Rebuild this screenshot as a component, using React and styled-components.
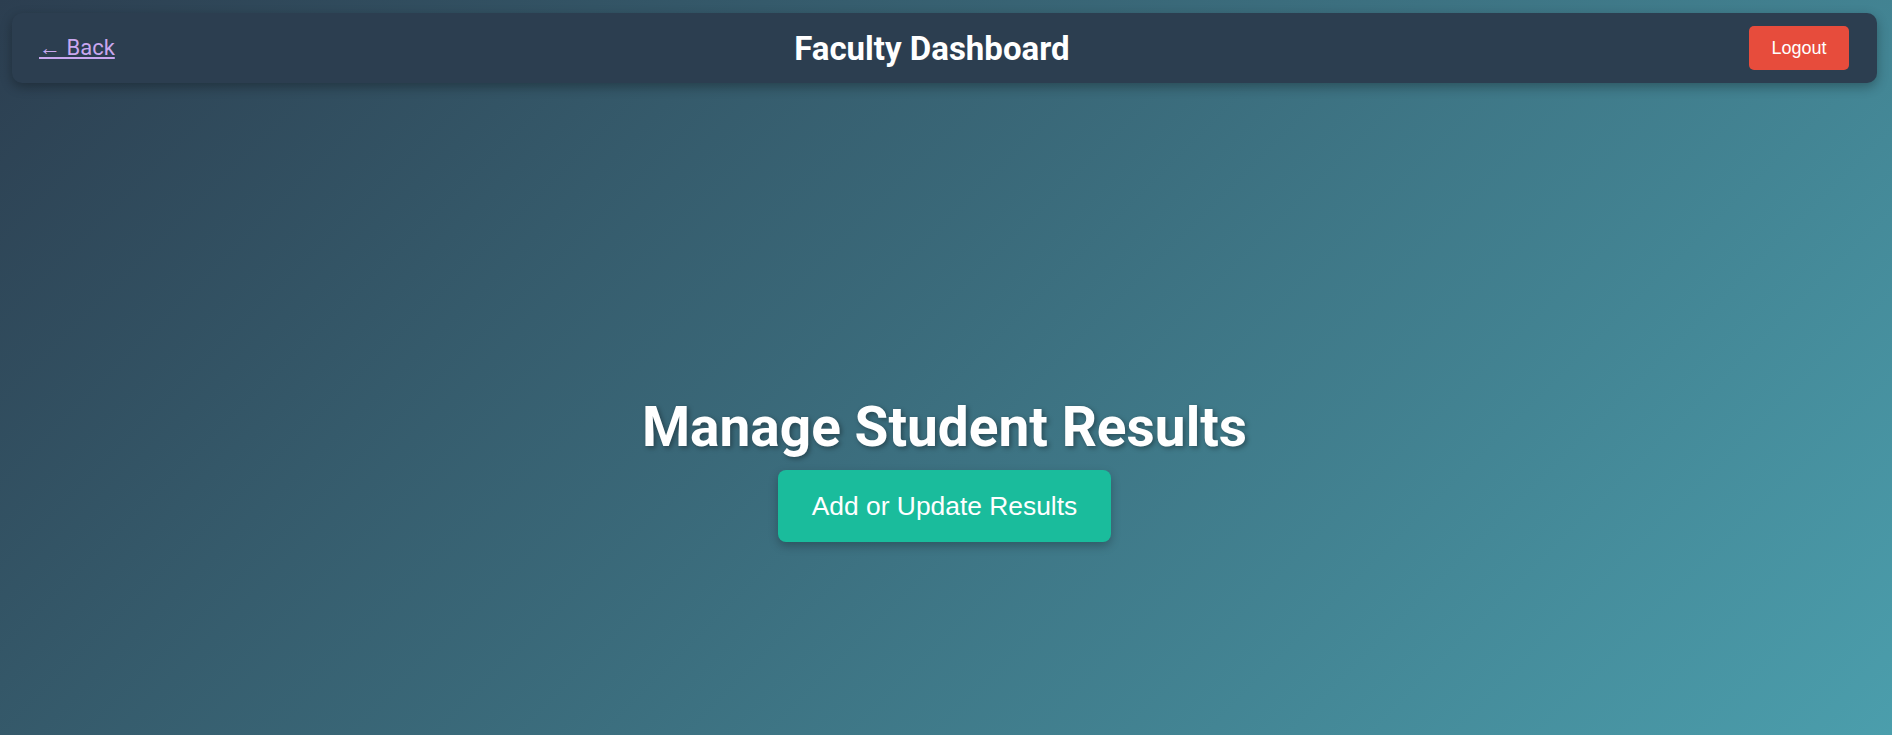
import React from 'react';
import styled, { createGlobalStyle } from 'styled-components';

const GlobalStyle = createGlobalStyle`
  body {
    margin: 0;
    overflow: hidden;
    font-family: Roboto, "Liberation Sans", sans-serif;
  }
`;

const Page = styled.div`
  min-height: 100vh;
  background: linear-gradient(135deg, #2c3e50 0%, #4ca1af 100%);
  padding: 13px 15px 0 12px;
  box-sizing: border-box;
`;

const Header = styled.header`
  display: flex;
  justify-content: space-between;
  align-items: center;
  height: 70px;
  padding: 0 28px 0 27px;
  box-sizing: border-box;
  background-color: #2c3e50;
  border-radius: 10px;
  box-shadow: 0 4px 12px rgba(0, 0, 0, 0.3);
`;

const BackLink = styled.a`
  font-size: 22px;
  color: #c9a7ef;
  text-decoration: underline;
  cursor: pointer;
`;

const Title = styled.h1`
  margin: 0;
  font-size: 33px;
  font-weight: 700;
  color: #fff;
`;

const LogoutButton = styled.button`
  font-family: "Liberation Sans", Arial, sans-serif;
  font-size: 18px;
  color: #fff;
  background-color: #e74c3c;
  border: none;
  border-radius: 5px;
  width: 100px;
  height: 44px;
  cursor: pointer;
`;

const Main = styled.main`
  min-height: 100vh;
  display: flex;
  flex-direction: column;
  align-items: center;
  justify-content: center;
  padding-top: 36px;
  box-sizing: border-box;
`;

const Heading = styled.h2`
  margin: 0 0 11px;
  font-size: 55px;
  font-weight: 700;
  color: #fff;
  text-shadow: 2px 2px 5px rgba(0, 0, 0, 0.35);
`;

const ActionButton = styled.button`
  font-family: "Liberation Sans", Arial, sans-serif;
  font-size: 26.4px;
  color: #fff;
  background-color: #1abc9c;
  border: none;
  border-radius: 8px;
  padding: 0 34px;
  height: 72px;
  box-shadow: 0 4px 10px rgba(0, 0, 0, 0.25);
  cursor: pointer;
`;

export default function App() {
  return (
    <>
      <GlobalStyle />
      <Page>
        <Header>
          <BackLink>← Back</BackLink>
          <Title>Faculty Dashboard</Title>
          <LogoutButton>Logout</LogoutButton>
        </Header>
        <Main>
          <Heading>Manage Student Results</Heading>
          <ActionButton>Add or Update Results</ActionButton>
        </Main>
      </Page>
    </>
  );
}
